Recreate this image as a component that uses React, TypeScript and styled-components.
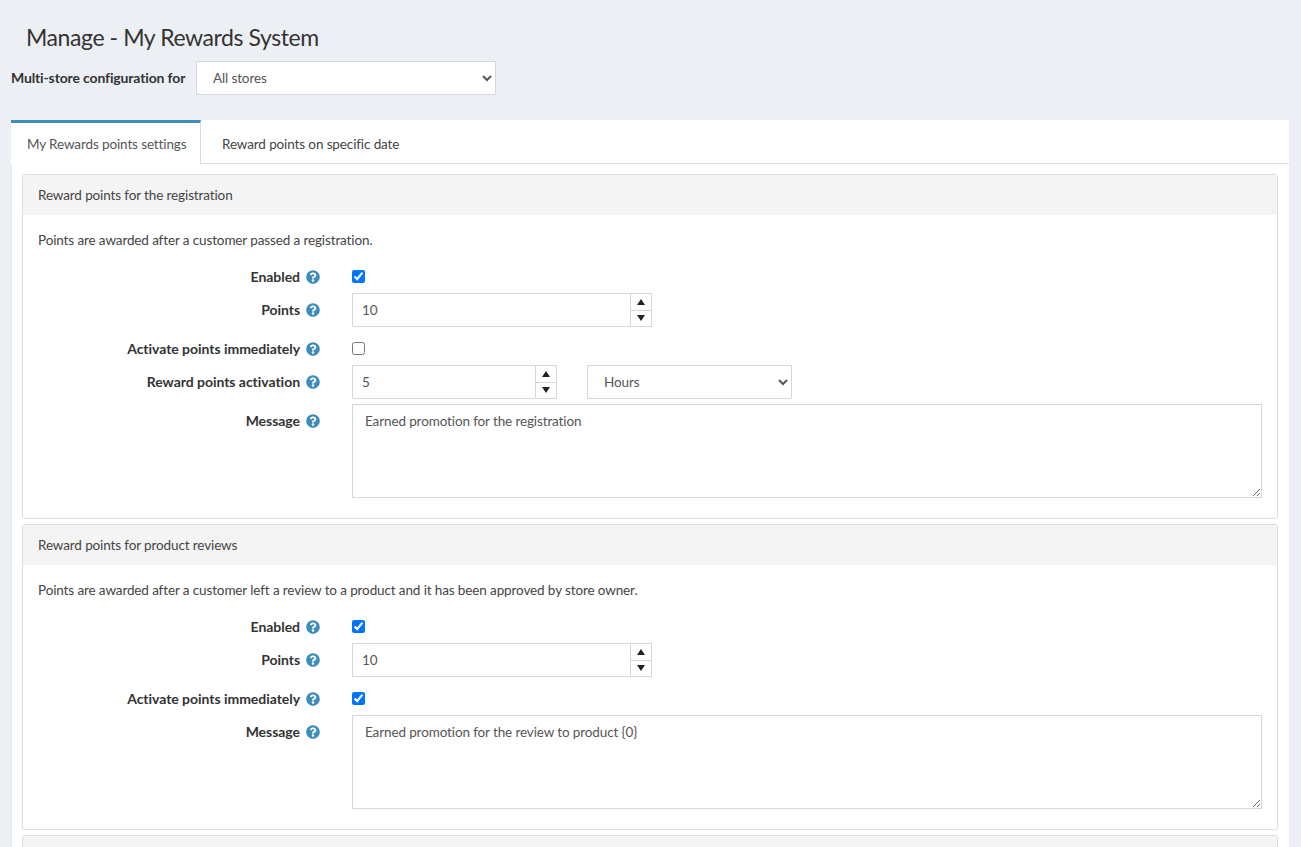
import React from "react";
import styled, { createGlobalStyle } from "styled-components";
import { FaQuestionCircle } from "react-icons/fa";

const Global = createGlobalStyle`
  html, body { margin: 0; height: 847px; overflow: hidden; background: #ecf0f5; }
  body { font-family: "Lato", "Noto Sans", sans-serif; font-size: 13.5px; letter-spacing: -0.12px; color: #333; }
  * { box-sizing: border-box; }
`;

const Page = styled.div`
  padding: 0 12px 0 11px;
`;
const Title = styled.h1`
  margin: 0;
  padding: 23px 0 0 15px;
  height: 61px;
  font-size: 23px;
  letter-spacing: -0.42px;
  line-height: 29px;
  font-weight: 400;
  color: #333;
`;
const StoreBar = styled.div`
  display: flex;
  align-items: center;
  gap: 10px;
  height: 34px;
  margin-bottom: 25px;
`;
const StoreLabel = styled.label`
  font-size: 14px;
  letter-spacing: -0.14px;
  font-weight: 700;
  white-space: nowrap;
  width: 175px;
  padding-bottom: 2px;
`;
const Select = styled.select<{ $width: number }>`
  width: ${(p) => p.$width}px;
  height: 34px;
  padding: 0 12px;
  border: 1px solid #d2d6de;
  border-radius: 0;
  background: #fff;
  color: #555;
  font: inherit;
  letter-spacing: inherit;
`;
const TabCard = styled.div`
  background: #fff;
  border-left: 1px solid #e4e6ea;
`;
const TabBar = styled.div`
  display: flex;
  height: 44px;
  border-bottom: 1px solid #ddd;
  margin-left: -1px;
`;
const Tab = styled.div<{ $active?: boolean }>`
  display: flex;
  align-items: center;
  height: 44px;
  padding: ${(p) => (p.$active ? "0 15px 0 16px" : "3px 21px 0 21px")};
  color: ${(p) => (p.$active ? "#555" : "#444")};
  white-space: nowrap;
  ${(p) =>
    p.$active
      ? `border-top: 3px solid #3c8dbc; border-right: 1px solid #ddd; background: #fff; width: 190px;`
      : ""}
`;
const TabBody = styled.div`
  display: flex;
  flex-direction: column;
  gap: 5px;
  padding: 10px 11px 0 10px;
`;
const Panel = styled.section`
  border: 1px solid #ddd;
  border-radius: 3px;
  background: #fff;
`;
const PanelHead = styled.div`
  height: 40px;
  display: flex;
  align-items: center;
  padding: 0 15px;
  background: #f4f4f4;
  color: #444;
`;
const PanelBody = styled.div`
  display: flex;
  flex-direction: column;
  padding: 15px 15px 20px;
`;
const Intro = styled.p`
  margin: 0 0 16px;
  line-height: 20px;
  color: #444;
`;
const Row = styled.div<{ $spaced?: boolean; $check?: boolean }>`
  display: flex;
  align-items: ${(p) => (p.$check ? "center" : "flex-start")};
  gap: 32px;
  margin-top: ${(p) => (p.$spaced ? "11px" : "5px")};
  &:first-of-type { margin-top: 0; }
`;
const LabelCell = styled.div<{ $check?: boolean }>`
  width: 282px;
  height: ${(p) => (p.$check ? "22px" : "34px")};
  display: flex;
  align-items: center;
  justify-content: flex-end;
  gap: 6px;
  font-size: 14px;
  letter-spacing: -0.04px;
  font-weight: 700;
  white-space: nowrap;
`;
const LabelText = styled.span`
  margin-bottom: 2px;
`;
const Hint = styled(FaQuestionCircle)`
  width: 14px;
  height: 14px;
  color: #3c8dbc;
  flex: none;
`;
const Check = styled.input.attrs({ type: "checkbox", readOnly: true })`
  width: 13px;
  height: 13px;
  margin: 0 0 2px;
  accent-color: #0075ff;
`;
const Controls = styled.div`
  display: flex;
  gap: 30px;
`;
const Numeric = styled.div<{ $width: number }>`
  display: flex;
  width: ${(p) => p.$width}px;
  height: 34px;
  border: 1px solid #d2d6de;
`;
const NumberText = styled.input`
  flex: 1;
  min-width: 0;
  border: 0;
  outline: 0;
  padding: 0 12px 0 9px;
  font: inherit;
  letter-spacing: inherit;
  color: #555;
`;
const Spin = styled.div`
  width: 21px;
  display: flex;
  flex-direction: column;
  border-left: 1px solid #d2d6de;
`;
const SpinButton = styled.div<{ $down?: boolean }>`
  flex: 1;
  display: flex;
  align-items: center;
  justify-content: center;
  & + & { border-top: 1px solid #d2d6de; }
  &::before {
    content: "";
    border-left: 4px solid transparent;
    border-right: 4px solid transparent;
    ${(p) => (p.$down ? "border-top: 6px solid #222;" : "border-bottom: 6px solid #222;")}
  }
`;
const Area = styled.textarea`
  width: 910px;
  height: 94px;
  padding: 6px 12px;
  border: 1px solid #d2d6de;
  border-radius: 0;
  outline: 0;
  font: inherit;
  letter-spacing: inherit;
  line-height: 20px;
  color: #555;
  display: block;
`;
const CutPanel = styled(Panel)`
  height: 40px;
  background: #f4f4f4;
`;

const Label = ({ text, check }: { text: string; check?: boolean }) => (
  <LabelCell $check={check}>
    <LabelText>{text}</LabelText>
    <Hint />
  </LabelCell>
);

const NumericField = ({ value, width }: { value: string; width: number }) => (
  <Numeric $width={width}>
    <NumberText defaultValue={value} />
    <Spin>
      <SpinButton />
      <SpinButton $down />
    </Spin>
  </Numeric>
);

export default function App() {
  return (
    <Page>
      <Global />
      <Title>Manage - My Rewards System</Title>
      <StoreBar>
        <StoreLabel>Multi-store configuration for</StoreLabel>
        <Select $width={300} defaultValue="All stores">
          <option>All stores</option>
        </Select>
      </StoreBar>
      <TabCard>
        <TabBar>
          <Tab $active>My Rewards points settings</Tab>
          <Tab>Reward points on specific date</Tab>
        </TabBar>
        <TabBody>
          <Panel>
            <PanelHead>Reward points for the registration</PanelHead>
            <PanelBody>
              <Intro>Points are awarded after a customer passed a registration.</Intro>
              <Row $check>
                <Label text="Enabled" check />
                <Check defaultChecked />
              </Row>
              <Row>
                <Label text="Points" />
                <NumericField value="10" width={300} />
              </Row>
              <Row $check $spaced>
                <Label text="Activate points immediately" check />
                <Check />
              </Row>
              <Row>
                <Label text="Reward points activation" />
                <Controls>
                  <NumericField value="5" width={205} />
                  <Select $width={205} defaultValue="Hours">
                    <option>Hours</option>
                  </Select>
                </Controls>
              </Row>
              <Row>
                <Label text="Message" />
                <Area defaultValue="Earned promotion for the registration" />
              </Row>
            </PanelBody>
          </Panel>
          <Panel>
            <PanelHead>Reward points for product reviews</PanelHead>
            <PanelBody>
              <Intro>Points are awarded after a customer left a review to a product and it has been approved by store owner.</Intro>
              <Row $check>
                <Label text="Enabled" check />
                <Check defaultChecked />
              </Row>
              <Row>
                <Label text="Points" />
                <NumericField value="10" width={300} />
              </Row>
              <Row $check $spaced>
                <Label text="Activate points immediately" check />
                <Check defaultChecked />
              </Row>
              <Row>
                <Label text="Message" />
                <Area defaultValue="Earned promotion for the review to product {0}" />
              </Row>
            </PanelBody>
          </Panel>
          <CutPanel />
        </TabBody>
      </TabCard>
    </Page>
  );
}
